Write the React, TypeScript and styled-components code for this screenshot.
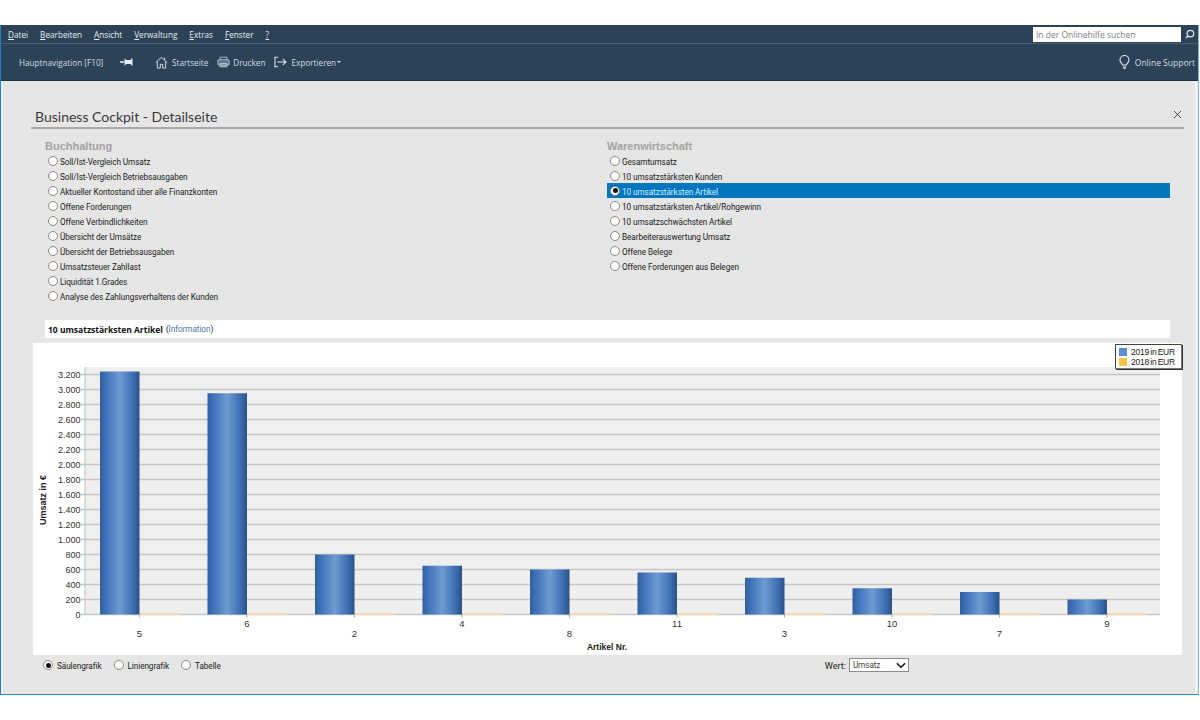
import React from "react"
import styled, { createGlobalStyle } from "styled-components"
import { Search, X } from "lucide-react"

const GlobalStyle = createGlobalStyle`
  html, body {
    margin: 0;
    background: #fff;
    font-family: "Open Sans", "Liberation Sans", sans-serif;
  }
`

const Page = styled.div`
  width: 1200px;
  height: 720px;
  padding-top: 25px;
  box-sizing: border-box;
  background: #fff;
  overflow: hidden;
`

const Window = styled.div`
  width: 1199px;
  height: 670px;
  box-sizing: border-box;
  border-left: 1px solid #1f7fc8;
  border-right: 1px solid #7fb6e0;
  border-bottom: 1px solid #2b8ae0;
  background: #e6e6e6;
  display: flex;
  flex-direction: column;
`

const MenuBar = styled.div`
  height: 19px;
  flex: none;
  background: #2c4257;
  border-bottom: 1px solid #4b6074;
  display: flex;
  align-items: center;
  padding-left: 7px;
  gap: 12px;
  box-sizing: border-box;
`

const MenuItem = styled.span`
  color: #e8edf1;
  font-size: 8.2px;
  u {
    text-underline-offset: 1px;
  }
`

const SearchBox = styled.div`
  margin-left: auto;
  margin-right: 3px;
  display: flex;
  align-items: center;
  gap: 4px;
  color: #dfe7ee;
  svg {
    transform: scaleX(-1);
  }
`

const SearchInput = styled.div`
  width: 148px;
  height: 15px;
  background: #fff;
  color: #808080;
  font-size: 8.5px;
  line-height: 15px;
  padding-left: 3px;
  box-sizing: border-box;
`

const NavBar = styled.div`
  height: 37px;
  flex: none;
  background: #2c4257;
  border-bottom: 1px solid #1d2f40;
  display: flex;
  align-items: center;
  padding-left: 18px;
  box-sizing: border-box;
  color: #d5dde4;
  font-size: 8.2px;
`

const NavTitle = styled.span`
  width: 101px;
`

const NavButton = styled.span`
  display: flex;
  align-items: center;
  gap: 3px;
  margin-right: 9px;
`

const PinButton = styled(NavButton)`
  margin-right: 21px;
`

const HomeButton = styled(NavButton)`
  gap: 4px;
`

const ExportButton = styled(NavButton)`
  gap: 4px;
`

const NavSupport = styled(NavButton)`
  margin-left: auto;
  margin-right: 3px;
  font-size: 8.5px;
  gap: 5px;
`

const Caret = styled.span`
  width: 0;
  height: 0;
  border-left: 2px solid transparent;
  border-right: 2px solid transparent;
  border-top: 2px solid #d5dde4;
  margin-left: -3px;
`

const Content = styled.div`
  flex: 1;
  display: flex;
  flex-direction: column;
  border-left: 2px solid #f1f1f1;
  border-right: 3px solid #efefef;
  padding: 0 11px 0 28px;
  min-height: 0;
`

const TitleRow = styled.div`
  height: 48px;
  flex: none;
  box-sizing: border-box;
  border-bottom: 2px solid #a9a9a9;
  display: flex;
  align-items: flex-end;
  justify-content: space-between;
  padding: 0 0 0 4px;
`

const Title = styled.h1`
  margin: 0;
  font-family: "Lato", "Open Sans", sans-serif;
  font-size: 14px;
  line-height: 20px;
  font-weight: 400;
  color: #3a3a3a;
`

const CloseButton = styled.span`
  display: flex;
  color: #222;
  margin: 0 0 6px;
`

const Columns = styled.div`
  height: 191px;
  flex: none;
  display: grid;
  grid-template-columns: 562px 563px;
  padding: 10px 0 0 14px;
  box-sizing: border-box;
`

const Column = styled.div`
  display: flex;
  flex-direction: column;
`

const GroupTitle = styled.div`
  font-family: "Liberation Sans", sans-serif;
  font-size: 11px;
  line-height: 14px;
  height: 14px;
  font-weight: 700;
  color: #a2a2a2;
`

const Option = styled.div<{ $active?: boolean }>`
  height: 15px;
  display: flex;
  align-items: center;
  gap: 2px;
  padding-left: 3px;
  font-family: "Roboto", sans-serif;
  font-size: 8.2px;
  letter-spacing: -0.07px;
  color: ${(p) => (p.$active ? "#d6ecfa" : "#222")};
  background: ${(p) => (p.$active ? "#0076bf" : "transparent")};
`

const RadioLabel = styled.span`
  margin-top: 2px;
`

const Radio = styled.span<{ $on?: boolean }>`
  width: 10px;
  height: 10px;
  flex: none;
  box-sizing: border-box;
  border-radius: 50%;
  border: 1px solid #8a8a8a;
  background: #fff;
  display: flex;
  align-items: center;
  justify-content: center;
  &::after {
    content: "";
    width: 5px;
    height: 5px;
    border-radius: 50%;
    background: ${(p) => (p.$on ? "#111" : "transparent")};
  }
`

const InfoBar = styled.div`
  height: 18px;
  flex: none;
  width: 1125px;
  margin-left: 14px;
  background: #fff;
  display: flex;
  align-items: center;
  padding-left: 3px;
  box-sizing: border-box;
  font-family: "Roboto", sans-serif;
  font-size: 8.2px;
  letter-spacing: -0.07px;
  color: #222;
  gap: 3px;
  b {
    font-family: "Open Sans", sans-serif;
    font-size: 8.5px;
    letter-spacing: 0;
    font-weight: 700;
    color: #111;
  }
  a {
    color: #4a7aa8;
  }
`

const ChartPanel = styled.div`
  position: relative;
  height: 312px;
  flex: none;
  width: 1149px;
  margin: 5px 0 0 2px;
  background: #fff;
`

const ChartSvg = styled.svg`
  display: block;
`

const Legend = styled.div`
  position: absolute;
  top: 1px;
  right: 0;
  width: 67px;
  height: 25px;
  box-sizing: border-box;
  background: #fff;
  border: 1px solid #777;
  border-top-color: #444;
  border-left-color: #444;
  box-shadow: 1px 1px 0 #333;
  padding: 2px 0 0 3px;
  display: flex;
  flex-direction: column;
  font-family: "Liberation Sans", sans-serif;
  font-size: 8.5px;
  letter-spacing: -0.2px;
  word-spacing: -1px;
  color: #222;
`

const LegendRow = styled.div`
  display: flex;
  align-items: center;
  height: 10px;
  gap: 4px;
`

const Swatch = styled.span<{ $color: string }>`
  width: 8px;
  height: 8px;
  background: ${(p) => p.$color};
`

const Footer = styled.div`
  flex: 1;
  display: flex;
  align-items: flex-start;
  padding: 5px 0 0 12px;
  font-family: "Roboto", sans-serif;
  font-size: 8.2px;
  letter-spacing: -0.07px;
  color: #222;
`

const FooterRadio = styled.label`
  display: flex;
  align-items: center;
  height: 10px;
  gap: 4px;
  margin-right: 12px;
`

const ValueField = styled.div`
  margin-left: 592px;
  margin-top: -2px;
  display: flex;
  align-items: center;
  gap: 3px;
  font-size: 9.2px;
`

const ValueSelect = styled.div`
  width: 60px;
  height: 14px;
  box-sizing: border-box;
  background: #fff;
  border: 1px solid #8d8d8d;
  display: flex;
  align-items: center;
  justify-content: space-between;
  padding: 0 2px 0 3px;
  font-size: 8.2px;
  color: #444;
`

const menu = [
  ["D", "atei"],
  ["B", "earbeiten"],
  ["A", "nsicht"],
  ["V", "erwaltung"],
  ["E", "xtras"],
  ["F", "enster"],
  ["?", ""],
]

const leftOptions = [
  "Soll/Ist-Vergleich Umsatz",
  "Soll/Ist-Vergleich Betriebsausgaben",
  "Aktueller Kontostand über alle Finanzkonten",
  "Offene Forderungen",
  "Offene Verbindlichkeiten",
  "Übersicht der Umsätze",
  "Übersicht der Betriebsausgaben",
  "Umsatzsteuer Zahllast",
  "Liquidität 1.Grades",
  "Analyse des Zahlungsverhaltens der Kunden",
]

const rightOptions = [
  "Gesamtumsatz",
  "10 umsatzstärksten Kunden",
  "10 umsatzstärksten Artikel",
  "10 umsatzstärksten Artikel/Rohgewinn",
  "10 umsatzschwächsten Artikel",
  "Bearbeiterauswertung Umsatz",
  "Offene Belege",
  "Offene Forderungen aus Belegen",
]

const bars = [
  { label: "5", value: 3240 },
  { label: "6", value: 2950 },
  { label: "2", value: 800 },
  { label: "4", value: 650 },
  { label: "8", value: 600 },
  { label: "11", value: 560 },
  { label: "3", value: 490 },
  { label: "10", value: 350 },
  { label: "7", value: 300 },
  { label: "9", value: 200 },
]

// svg coordinates: panel starts at x=33, y=343 on the page
const plotLeft = 52
const plotRight = 1127
const plotTop = 24
const zeroY = 271.5
const step = 107.5
const barWidth = 39.5
const yFor = (v: number) => zeroY - (v / 200) * 15

const Chart = () => {
  const ticks = Array.from({ length: 17 }, (_, i) => i * 200)
  return (
    <ChartSvg width="1149" height="312">
      <defs>
        <linearGradient id="bar" x1="0" x2="1" y1="0" y2="0">
          <stop offset="0" stopColor="#2f5f9e" />
          <stop offset="0.15" stopColor="#3f72b8" />
          <stop offset="0.5" stopColor="#6f9ad2" />
          <stop offset="0.82" stopColor="#3f70b4" />
          <stop offset="1" stopColor="#2a5186" />
        </linearGradient>
      </defs>
      <rect x={plotLeft} y={plotTop} width={plotRight - plotLeft} height={zeroY - plotTop} fill="#efefef" />
      {ticks.map((t) => (
        <g key={t}>
          <line x1={plotLeft - 4} x2={plotRight} y1={yFor(t)} y2={yFor(t)} stroke="#c6c6c6" strokeWidth="1.4" />
          <text x="47.500" y={yFor(t) + 3} textAnchor="end" fontSize="9" fontFamily="Liberation Sans" fill="#333">
            {t === 0 ? "0" : t.toLocaleString("de-DE")}
          </text>
        </g>
      ))}
      <line x1={plotLeft} x2={plotLeft} y1={plotTop} y2={zeroY} stroke="#bdbdbd" />
      {bars.map((b, i) => {
        const x = 67 + i * step
        const tickX = x + barWidth
        return (
          <g key={b.label}>
            <rect x={x} y={yFor(b.value)} width={barWidth} height={zeroY - yFor(b.value)} fill="url(#bar)" />
            <rect x={tickX + 1} y={zeroY - 1.5} width="39" height="2" fill="#f1dcae" />
            <line x1={tickX} x2={tickX} y1={zeroY} y2={zeroY + 3} stroke="#aaa" />
            <text
              x={tickX}
              y={i % 2 === 0 ? 294 : 283.500}
              textAnchor="middle"
              fontSize="9.500"
              fontFamily="Liberation Sans"
              fill="#333"
            >
              {b.label}
            </text>
          </g>
        )
      })}
      <text x="574" y="307" textAnchor="middle" fontSize="8.500" fontWeight="700" fontFamily="Liberation Sans" fill="#222">
        Artikel Nr.
      </text>
      <text
        transform="translate(13 157) rotate(-90)"
        textAnchor="middle"
        fontSize="9"
        fontWeight="700"
        fontFamily="Liberation Sans"
        fill="#222"
      >
        Umsatz in €
      </text>
    </ChartSvg>
  )
}

const PinIcon = () => (
  <svg width="14" height="10" viewBox="0 0 14 10" fill="#e6ecf1">
    <path d="M0 4.200h4v1.600H0z" />
    <path d="M4.500 1.500 6.500 3h4l1-1.500h1v7h-1L10.500 7h-4l-2 1.500z" />
  </svg>
)

const HomeIcon = () => (
  <svg width="13" height="13" viewBox="0 0 14 14" fill="none" stroke="#dfe6ec" strokeWidth="1">
    <path d="M.8 7.200 7 1.400l6.200 5.800" />
    <path d="M2.500 6v7h3.200V9h2.600v4h3.200V6" />
    <path d="M10.300 2v2.400" />
  </svg>
)

const PrintIcon = () => (
  <svg width="13" height="12" viewBox="0 0 15 13" fill="none" stroke="#c3ccd5" strokeWidth="1">
    <path d="M3.500 4V1h8v3" />
    <rect x="1" y="4" width="13" height="6" rx="1" fill="#5a6f82" />
    <path d="M3.500 8h8v4h-8z" fill="#8c9dac" />
  </svg>
)

const ExportIcon = () => (
  <svg width="13" height="12" viewBox="0 0 14 12" fill="none" stroke="#e6ecf1" strokeWidth="1.100">
    <path d="M4.500.8H1v10.400h3.500" />
    <path d="M3.500 6H13M9.500 2.800 13 6l-3.500 3.200" />
  </svg>
)

const BulbIcon = () => (
  <svg width="11" height="14" viewBox="0 0 11 14" fill="none" stroke="#e6ecf1" strokeWidth="1.100">
    <path d="M3.600 10C3.200 8.200 1 7.400 1 5a4.500 4.500 0 0 1 9 0c0 2.400-2.200 3.200-2.600 5z" />
    <path d="M3.800 12h3.400M4.500 13.400h2" />
  </svg>
)

const ChevronIcon = () => (
  <svg width="10" height="7" viewBox="0 0 11 7" fill="none" stroke="#111" strokeWidth="1.600">
    <path d="M1 1l4.500 4.500L10 1" />
  </svg>
)

export default function App() {
  return (
    <Page>
      <GlobalStyle />
      <Window>
        <MenuBar>
          {menu.map(([key, rest]) => (
            <MenuItem key={key}>
              <u>{key}</u>
              {rest}
            </MenuItem>
          ))}
          <SearchBox>
            <SearchInput>In der Onlinehilfe suchen</SearchInput>
            <Search size={10} strokeWidth={3} />
          </SearchBox>
        </MenuBar>
        <NavBar>
          <NavTitle>Hauptnavigation [F10]</NavTitle>
          <PinButton>
            <PinIcon />
          </PinButton>
          <HomeButton>
            <HomeIcon />
            Startseite
          </HomeButton>
          <NavButton>
            <PrintIcon />
            Drucken
          </NavButton>
          <ExportButton>
            <ExportIcon />
            Exportieren
            <Caret />
          </ExportButton>
          <NavSupport>
            <BulbIcon />
            Online Support
          </NavSupport>
        </NavBar>
        <Content>
          <TitleRow>
            <Title>Business Cockpit - Detailseite</Title>
            <CloseButton>
              <X size={13} strokeWidth={1.5} />
            </CloseButton>
          </TitleRow>
          <Columns>
            <Column>
              <GroupTitle>Buchhaltung</GroupTitle>
              {leftOptions.map((o) => (
                <Option key={o}>
                  <Radio />
                  <RadioLabel>{o}</RadioLabel>
                </Option>
              ))}
            </Column>
            <Column>
              <GroupTitle>Warenwirtschaft</GroupTitle>
              {rightOptions.map((o) => (
                <Option key={o} $active={o === "10 umsatzstärksten Artikel"}>
                  <Radio $on={o === "10 umsatzstärksten Artikel"} />
                  <RadioLabel>{o}</RadioLabel>
                </Option>
              ))}
            </Column>
          </Columns>
          <InfoBar>
            <b>10 umsatzstärksten Artikel</b>
            <span>
              (<a>Information</a>)
            </span>
          </InfoBar>
          <ChartPanel>
            <Chart />
            <Legend>
              <LegendRow>
                <Swatch $color="#5b8dd0" />
                2019 in EUR
              </LegendRow>
              <LegendRow>
                <Swatch $color="#f6c544" />
                2018 in EUR
              </LegendRow>
            </Legend>
          </ChartPanel>
          <Footer>
            <FooterRadio>
              <Radio $on />
              <RadioLabel>Säulengrafik</RadioLabel>
            </FooterRadio>
            <FooterRadio>
              <Radio />
              <RadioLabel>Liniengrafik</RadioLabel>
            </FooterRadio>
            <FooterRadio>
              <Radio />
              <RadioLabel>Tabelle</RadioLabel>
            </FooterRadio>
            <ValueField>
              Wert:
              <ValueSelect>
                Umsatz
                <ChevronIcon />
              </ValueSelect>
            </ValueField>
          </Footer>
        </Content>
      </Window>
    </Page>
  )
}
